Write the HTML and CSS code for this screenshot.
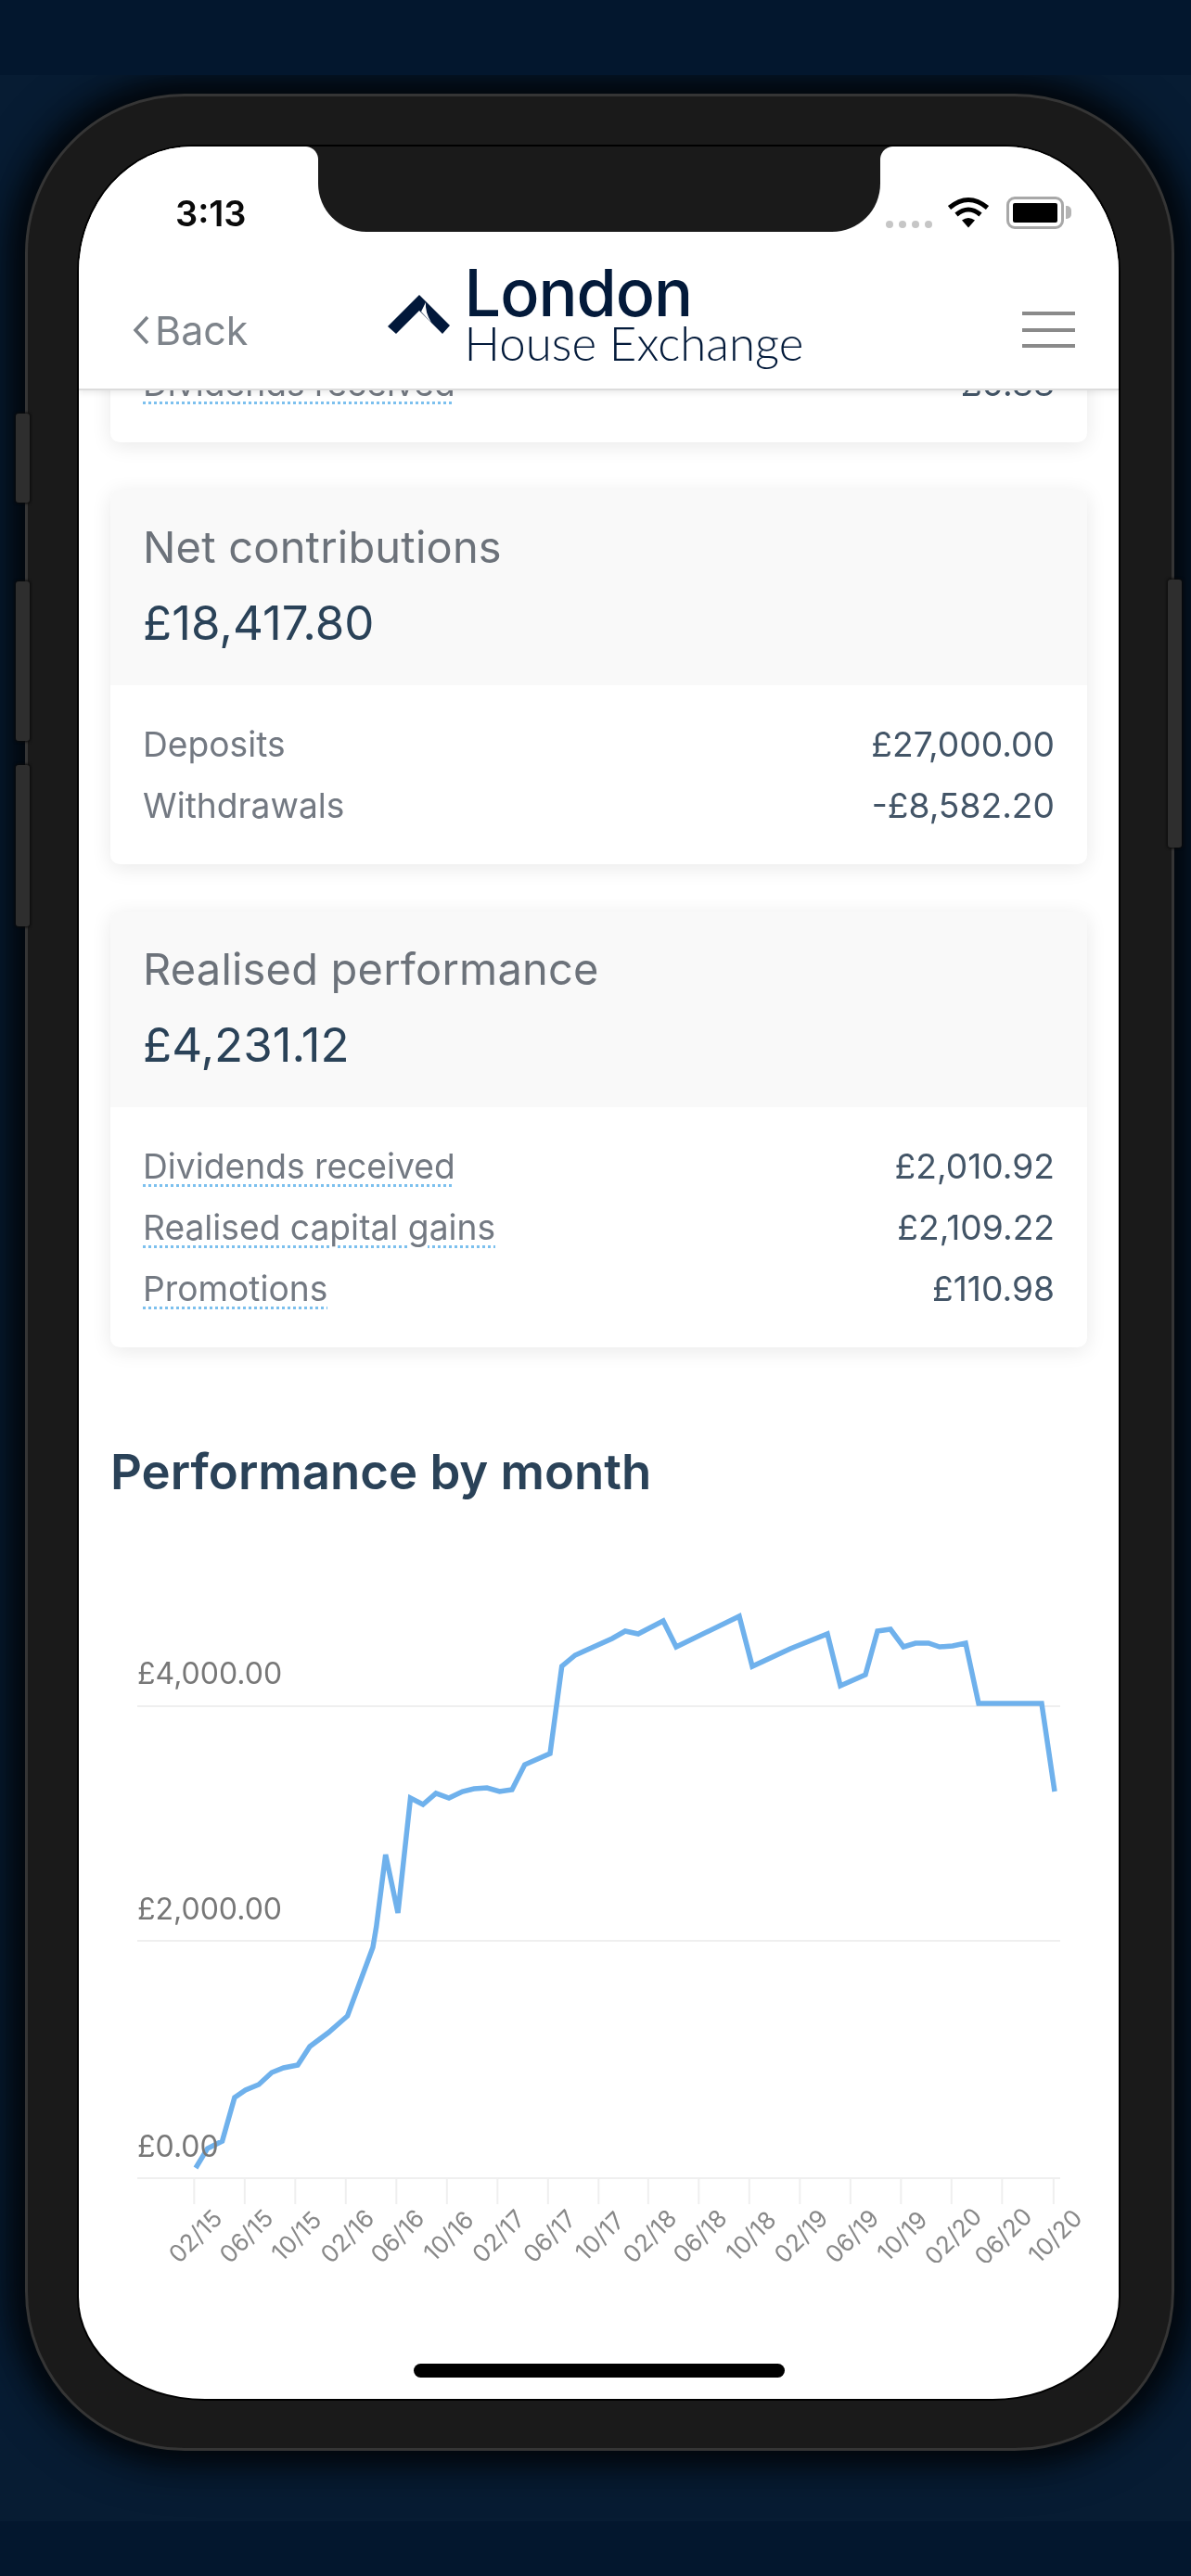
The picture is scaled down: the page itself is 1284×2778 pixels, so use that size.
FILE: index.html
```html
<!DOCTYPE html>
<html lang="en">
<head>
<meta charset="utf-8">
<title>London House Exchange</title>
<link rel="stylesheet" href="styles.css">
</head>
<body>
<div class="stage">
  <div class="device">
    <span class="btn btn-l1"></span>
    <span class="btn btn-l2"></span>
    <span class="btn btn-l3"></span>
    <span class="btn btn-r1"></span>
    <div class="screen">
      <div class="notch"></div>
      <div class="home"></div>
      <header class="topbar">
        <div class="status">
          <span class="time">3:13</span>
          <div class="status-icons">
            <div class="signal"><i></i><i></i><i></i><i></i></div>
            <svg class="wifi" viewBox="0 0 46 34"><path d="M2.5 12 Q23 -5 43.5 12 M10 19.5 Q23 8.5 36 19.5" fill="none" stroke="#000" stroke-width="5"/><path d="M16 25.5 Q23 20.5 30 25.5 L23 33.5 Z" fill="#000"/></svg>
            <div class="battery"><span class="battery-fill"></span></div>
            <span class="battery-nub"></span>
          </div>
        </div>
        <nav class="navbar">
          <a class="back">
            <svg class="back-chevron" viewBox="0 0 18 32"><path d="M16 2 L3 16 L16 30" fill="none" stroke="#7c8289" stroke-width="3.5"/></svg>
            <span>Back</span>
          </a>
          <div class="logo">
            <svg class="logo-mark" viewBox="0 0 68 43"><path d="M34 0 L67 33 L59 42 L34 17 L9 42 L0 34 Z" fill="#02183a"/><path d="M41 8 Q40 18 47 30 L36 18 Z" fill="#fff"/></svg>
            <div class="logo-text">
              <span class="logo-top">London</span>
              <span class="logo-bottom">House Exchange</span>
            </div>
          </div>
          <button class="burger" aria-label="Menu"><i></i><i></i><i></i></button>
        </nav>
      </header>
      <main class="viewport">
        <div class="scroll">
          <section class="card card-clipped">
            <div class="card-body">
              <div class="row"><span class="tip">Dividends received</span><span class="val">£0.88</span></div>
            </div>
          </section>
          <section class="card">
            <div class="card-head">
              <div class="card-label">Net contributions</div>
              <div class="card-value">£18,417.80</div>
            </div>
            <div class="card-body">
              <div class="row"><span class="name">Deposits</span><span class="val">£27,000.00</span></div>
              <div class="row"><span class="name">Withdrawals</span><span class="val">-£8,582.20</span></div>
            </div>
          </section>
          <section class="card">
            <div class="card-head">
              <div class="card-label">Realised performance</div>
              <div class="card-value">£4,231.12</div>
            </div>
            <div class="card-body">
              <div class="row"><span class="tip">Dividends received</span><span class="val">£2,010.92</span></div>
              <div class="row"><span class="tip">Realised capital gains</span><span class="val">£2,109.22</span></div>
              <div class="row"><span class="tip">Promotions</span><span class="val">£110.98</span></div>
            </div>
          </section>
          <h2 class="chart-title">Performance by month</h2>
          <svg class="chart" viewBox="85 1640 1121 800">
            <g class="grid">
              <path d="M148 1840H1143M148 2093H1143M148 2349H1143"/>
              <path d="M209.3 2349V2377M263.8 2349V2377M318.3 2349V2377M372.8 2349V2377M427.3 2349V2377M481.8 2349V2377M536.3 2349V2377M590.8 2349V2377M645.3 2349V2377M698.8 2349V2377M753.3 2349V2377M807.8 2349V2377M862.3 2349V2377M916.8 2349V2377M971.3 2349V2377M1025.8 2349V2377M1080.3 2349V2377M1135.8 2349V2377"/>
            </g>
            <polyline class="line" points="211,2338 223.6,2317 239.6,2309 252.9,2262 264.6,2254 279,2248 293,2235 305.7,2230 321,2227 334,2207 354,2192 374.6,2174 402,2100 405.7,2078 415.7,2000 429,2063 442.5,1939 456,1946 470,1934 484,1939 498.6,1932 511,1929 525,1928 538.6,1932 552,1930 565.7,1903 593,1891 605.7,1797 620,1785 660,1767 674,1759 688,1762 715,1748 729,1776 797,1743 811,1797 852,1778 892,1762 906,1818 933,1806 946,1759 960,1757 974,1776 987,1772 1001,1772 1013,1776 1027,1775 1041,1772 1055,1837 1123,1837 1137,1932"/>
            <g class="ylabels">
              <text x="148" y="1816">£4,000.00</text>
              <text x="148" y="2070">£2,000.00</text>
              <text x="148" y="2326">£0.00</text>
            </g>
            <g class="xlabels">
              <text transform="translate(212 2413) rotate(-45)">02/15</text>
              <text transform="translate(267 2413) rotate(-45)">06/15</text>
              <text transform="translate(321 2413) rotate(-45)">10/15</text>
              <text transform="translate(376 2413) rotate(-45)">02/16</text>
              <text transform="translate(430 2413) rotate(-45)">06/16</text>
              <text transform="translate(485 2413) rotate(-45)">10/16</text>
              <text transform="translate(539 2413) rotate(-45)">02/17</text>
              <text transform="translate(594 2413) rotate(-45)">06/17</text>
              <text transform="translate(648 2413) rotate(-45)">10/17</text>
              <text transform="translate(702 2413) rotate(-45)">02/18</text>
              <text transform="translate(756 2413) rotate(-45)">06/18</text>
              <text transform="translate(811 2413) rotate(-45)">10/18</text>
              <text transform="translate(865 2413) rotate(-45)">02/19</text>
              <text transform="translate(920 2413) rotate(-45)">06/19</text>
              <text transform="translate(974 2413) rotate(-45)">10/19</text>
              <text transform="translate(1029 2413) rotate(-45)">02/20</text>
              <text transform="translate(1083 2413) rotate(-45)">06/20</text>
              <text transform="translate(1139 2413) rotate(-45)">10/20</text>
            </g>
          </svg>
        </div>
      </main>
    </div>
  </div>
</div>
</body>
</html>
```

FILE: styles.css
```css
* { box-sizing: border-box; }

html, body {
  margin: 0;
  padding: 0;
  background: #03172e;
}

body {
  width: 1284px;
  height: 2778px;
  overflow: hidden;
  font-family: "Inter", "Lato", sans-serif;
}

.stage {
  margin-top: 81px;
  height: 2638px;
  padding: 20px 18px 0 27px;
  overflow: hidden;
  background: #071c33;
}

.device {
  position: relative;
  width: 1239px;
  height: 2542px;
  padding: 54px 57px 53px 55px;
  background: #1a1a1a;
  border: 3px solid #353535;
  border-radius: 172px;
  box-shadow: 0 0 50px 12px rgba(0, 0, 0, .7), 0 0 24px 14px rgba(0, 0, 0, .45);
}

.btn {
  position: absolute;
  width: 15px;
  background: #2e2e2e;
  border-radius: 3px;
  box-shadow: 0 0 3px 1px #0a0a0a;
}
.btn-l1 { left: -13px; top: 342px; height: 96px; }
.btn-l2 { left: -13px; top: 523px; height: 172px; }
.btn-l3 { left: -13px; top: 721px; height: 174px; }
.btn-r1 { right: -11px; top: 521px; height: 289px; }

.screen {
  position: relative;
  width: 1121px;
  height: 2429px;
  display: flex;
  flex-direction: column;
  overflow: hidden;
  background: #fff;
  border-radius: 122px 122px 136px 136px / 136px 136px 110px 110px;
  box-shadow: 0 0 0 2px #000;
  filter: blur(.5px);
}

.notch {
  position: absolute;
  top: 0;
  left: 258px;
  width: 606px;
  height: 92px;
  z-index: 5;
  background: #1a1a1a;
  border-radius: 0 0 52px 52px;
}
.notch::before,
.notch::after {
  content: "";
  position: absolute;
  top: 0;
  width: 14px;
  height: 14px;
}
.notch::before { left: -14px; background: radial-gradient(circle at 0 100%, #fff 13.5px, #1a1a1a 14.5px); }
.notch::after { right: -14px; background: radial-gradient(circle at 100% 100%, #fff 13.5px, #1a1a1a 14.5px); }

.home {
  position: absolute;
  left: 361px;
  bottom: 23px;
  width: 400px;
  height: 15px;
  z-index: 5;
  background: #000;
  border-radius: 8px;
}

.topbar {
  position: relative;
  z-index: 3;
  flex: none;
  height: 263px;
  background: #fff;
  border-bottom: 2px solid #dcdcdc;
  box-shadow: 0 3px 6px rgba(0, 0, 0, .08);
}

.status {
  height: 100px;
  padding: 50px 51px 0 104px;
  display: flex;
  justify-content: space-between;
  align-items: flex-start;
}

.time {
  font-size: 38px;
  font-weight: 600;
  line-height: 44px;
  color: #0a0a0a;
}

.status-icons {
  display: flex;
  align-items: flex-start;
  margin-top: 4px;
}

.signal {
  display: flex;
  gap: 6px;
  margin-top: 26px;
  margin-right: 16px;
}
.signal i {
  width: 8px;
  height: 8px;
  border-radius: 50%;
  background: #c6c6c6;
}

.wifi {
  width: 46px;
  height: 34px;
  margin-right: 18px;
}

.battery {
  width: 62px;
  height: 35px;
  padding: 4px;
  border: 3px solid #a8a8a8;
  border-radius: 9px;
}
.battery-fill {
  display: block;
  height: 100%;
  background: #000;
  border-radius: 2px;
}
.battery-nub {
  width: 6px;
  height: 14px;
  margin: 10px 0 0 2px;
  background: #b4b4b4;
  border-radius: 0 5px 5px 0;
}

.navbar {
  height: 161px;
  padding: 34px 47px 0 58px;
  display: grid;
  grid-template-columns: 1fr auto 1fr;
  align-items: center;
}

.back {
  display: flex;
  align-items: center;
  gap: 6px;
  font-size: 43px;
  line-height: 48px;
  color: #7e848b;
}
.back-chevron {
  width: 18px;
  height: 32px;
}

.logo {
  display: flex;
  align-items: flex-start;
  gap: 15px;
  margin: -37px 18px 0 0;
}
.logo-mark {
  width: 68px;
  height: 43px;
  margin-top: 35px;
}
.logo-text {
  display: flex;
  flex-direction: column;
  color: #031a3a;
}
.logo-top {
  font-size: 70px;
  font-weight: 500;
  line-height: 66px;
  letter-spacing: -1px;
}
.logo-bottom {
  font-family: "Lato", sans-serif;
  font-size: 51px;
  font-weight: 300;
  line-height: 42px;
}

.burger {
  justify-self: end;
  width: 57px;
  padding: 0;
  border: 0;
  background: none;
  display: flex;
  flex-direction: column;
  gap: 13.5px;
}
.burger i {
  display: block;
  height: 4px;
  background: #8a8a8a;
}

.viewport {
  flex: 1;
  overflow: hidden;
}

.scroll {
  margin-top: -71px;
  padding: 0 34px;
  display: flex;
  flex-direction: column;
  gap: 51px;
}

.card {
  background: #fff;
  border-radius: 10px;
  overflow: hidden;
  box-shadow: 0 4px 22px rgba(0, 0, 0, .09);
}

.card-head {
  height: 211px;
  padding: 32px 35px 0;
  background: #f9f9f9;
}

.card-label {
  font-size: 47px;
  letter-spacing: .2px;
  line-height: 60px;
  color: #6c727a;
}

.card-value {
  margin-top: 20px;
  font-size: 51px;
  line-height: 64px;
  color: #2a4258;
}

.card-body {
  padding: 30px 35px 31px;
}

.row {
  height: 66px;
  display: flex;
  justify-content: space-between;
  align-items: center;
  font-size: 37.2px;
}

.name,
.tip {
  color: #737982;
}
.tip {
  text-decoration: underline dotted #7cc0ee 3px;
  text-underline-offset: 6px;
}
.val {
  color: #435567;
}

.chart-title {
  margin: 48px 0 0 0;
  font-size: 52.7px;
  font-weight: 600;
  line-height: 70px;
  color: #2a4258;
}

.chart {
  display: block;
  width: 1121px;
  height: 800px;
  margin: -33px 0 0 -34px;
}

.grid path {
  fill: none;
  stroke: #efefef;
  stroke-width: 2;
}

.line {
  fill: none;
  stroke: #6fb1ec;
  stroke-width: 5.5;
  stroke-linejoin: miter;
}

.ylabels text {
  font-size: 32px;
  fill: #777;
}

.xlabels text {
  font-size: 26px;
  fill: #888;
  text-anchor: middle;
  dominant-baseline: middle;
}
```
